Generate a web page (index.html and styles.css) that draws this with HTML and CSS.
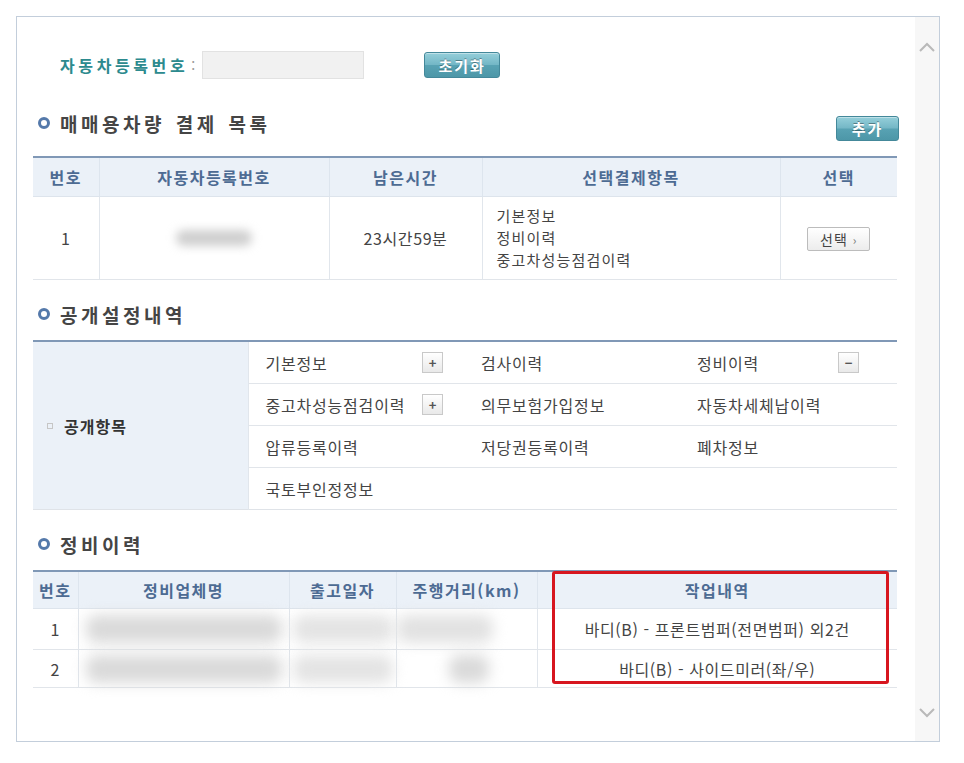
FILE: index.html
```html
<!DOCTYPE html>
<html lang="ko">
<head>
<meta charset="UTF-8" />
<meta name="viewport" content="width=device-width, initial-scale=1" />
<title>매매용차량 결제 목록</title>
<link rel="stylesheet" href="styles.css">
</head>
<body>

<div class="frame">
  <div class="content">

    <div class="search">
      <span class="search-label">자동차등록번호</span><span class="colon">:</span>
      <input class="search-input" type="text" />
      <button class="btn-teal btn-reset">초기화</button>
    </div>

    <div class="sec-head">
      <h2 class="sec-title"><span class="ring"></span>매매용차량 결제 목록</h2>
      <button class="btn-teal btn-add">추가</button>
    </div>

    <table class="grid pay">
      <colgroup>
        <col style="width:66px"><col style="width:230px"><col style="width:153px"><col style="width:298px"><col style="width:117px">
      </colgroup>
      <thead>
        <tr><th>번호</th><th>자동차등록번호</th><th>남은시간</th><th>선택결제항목</th><th>선택</th></tr>
      </thead>
      <tbody>
        <tr>
          <td>1</td>
          <td><div class="blur blur-plate"></div></td>
          <td>23시간59분</td>
          <td class="items">기본정보<br>정비이력<br>중고차성능점검이력</td>
          <td><button class="btn-select">선택 <span class="arr">›</span></button></td>
        </tr>
      </tbody>
    </table>

    <h2 class="sec-title sec-gap"><span class="ring"></span>공개설정내역</h2>

    <table class="open">
      <colgroup>
        <col style="width:215px"><col style="width:216px"><col style="width:216px"><col style="width:217px">
      </colgroup>
      <tbody>
        <tr>
          <th rowspan="4"><span class="sq"></span>공개항목</th>
          <td><div class="cell">기본정보<span class="mini">+</span></div></td>
          <td><div class="cell">검사이력</div></td>
          <td><div class="cell last">정비이력<span class="mini">−</span></div></td>
        </tr>
        <tr>
          <td><div class="cell">중고차성능점검이력<span class="mini">+</span></div></td>
          <td><div class="cell">의무보험가입정보</div></td>
          <td><div class="cell">자동차세체납이력</div></td>
        </tr>
        <tr>
          <td><div class="cell">압류등록이력</div></td>
          <td><div class="cell">저당권등록이력</div></td>
          <td><div class="cell">폐차정보</div></td>
        </tr>
        <tr>
          <td><div class="cell">국토부인정정보</div></td>
          <td></td>
          <td></td>
        </tr>
      </tbody>
    </table>

    <h2 class="sec-title sec-gap"><span class="ring"></span>정비이력</h2>

    <div class="repair-wrap">
      <table class="grid repair">
        <colgroup>
          <col style="width:45px"><col style="width:211px"><col style="width:107px"><col style="width:141px"><col style="width:360px">
        </colgroup>
        <thead>
          <tr><th>번호</th><th>정비업체명</th><th>출고일자</th><th>주행거리(km)</th><th>작업내역</th></tr>
        </thead>
        <tbody>
          <tr class="r1">
            <td>1</td>
            <td><div class="blur blur-name"></div></td>
            <td><div class="blur blur-date"></div></td>
            <td><div class="blur blur-km"></div></td>
            <td>바디(B) - 프론트범퍼(전면범퍼) 외2건</td>
          </tr>
          <tr class="r2">
            <td>2</td>
            <td><div class="blur blur-name"></div></td>
            <td><div class="blur blur-date"></div></td>
            <td><div class="blur blur-km-short"></div></td>
            <td>바디(B) - 사이드미러(좌/우)</td>
          </tr>
        </tbody>
      </table>
      <div class="highlight"></div>
    </div>

  </div>

  <div class="scrollbar">
    <svg width="18" height="12" viewBox="0 0 18 12"><polyline points="2,10 9,3 16,10" fill="none" stroke="#b9b9b9" stroke-width="2"/></svg>
    <svg width="18" height="12" viewBox="0 0 18 12"><polyline points="2,2 9,9 16,2" fill="none" stroke="#b9b9b9" stroke-width="2"/></svg>
  </div>
</div>

</body>
</html>
```

FILE: styles.css
```css
body {
  margin: 0;
  background: #fff;
  font-family: 'Noto Sans CJK KR', 'Noto Sans', sans-serif;
  color: #444;
}
.frame {
  display: flex;
  box-sizing: border-box;
  width: 924px;
  height: 726px;
  margin: 16px 0 0 16px;
  border: 1px solid #c3cedb;
}
.content {
  flex: 1;
  padding: 34px 16px 0 16px;
}

/* 검색줄 */
.search {
  display: flex;
  align-items: center;
  height: 28px;
  margin-left: 27px;
}
.search-label {
  font-size: 16px;
  font-weight: bold;
  letter-spacing: 3.6px;
  color: #2c8a8e;
}
.colon {
  margin: 0 7px 0 3px;
  font-size: 14px;
  color: #999;
}
.search-input {
  box-sizing: border-box;
  width: 162px;
  height: 28px;
  border: 1px solid #e2e2e2;
  background: #f1f1f1;
}
.btn-teal {
  box-sizing: border-box;
  border: 1px solid #44889a;
  border-radius: 3px;
  background: linear-gradient(#95cfda, #74b7c6 48%, #58a2b3 52%, #4d97a8);
  box-shadow: inset 0 1px 0 rgba(255, 255, 255, 0.4);
  color: #fff;
  font-family: inherit;
  font-size: 15px;
  font-weight: bold;
  letter-spacing: 2px;
  text-shadow: 0 -1px 0 rgba(0, 0, 0, 0.35);
  padding: 0;
}
.btn-reset {
  width: 76px;
  height: 26px;
  margin-left: 60px;
}
.btn-add {
  width: 63px;
  height: 25px;
  align-self: flex-end;
}

/* 섹션 제목 */
.sec-head {
  display: flex;
  justify-content: space-between;
  align-items: flex-start;
  height: 30px;
  margin: 32px 0 15px;
}
.sec-title {
  display: flex;
  align-items: center;
  height: 24px;
  margin: 0;
  padding-left: 5px;
  font-size: 19px;
  font-weight: bold;
  letter-spacing: 3.5px;
  word-spacing: 2px;
  color: #454545;
}
.sec-gap {
  margin: 22px 0 14px;
}
.ring {
  box-sizing: border-box;
  width: 12px;
  height: 12px;
  margin-right: 10px;
  border: 3px solid #5479aa;
  border-radius: 50%;
}

/* 공통 표 */
table {
  border-collapse: collapse;
  table-layout: fixed;
  width: 864px;
}
.grid {
  border-top: 2px solid #8098b6;
}
.grid th {
  height: 38px;
  padding: 0;
  background: #ebf1f8;
  border-left: 1px solid #dde5ee;
  border-bottom: 1px solid #dde4ec;
  font-size: 16px;
  font-weight: bold;
  letter-spacing: 1.5px;
  color: #4d6b93;
}
.grid td {
  padding: 0;
  text-align: center;
  font-size: 16px;
  letter-spacing: 0.6px;
  border-left: 1px solid #e1e6ec;
  border-bottom: 1px solid #e1e5ea;
}
.grid th:first-child,
.grid td:first-child {
  border-left: none;
}
.pay td {
  height: 82px;
}
.pay td.items {
  text-align: left;
  padding-left: 14px;
  font-size: 15px;
  letter-spacing: 1.2px;
  line-height: 22px;
}
.btn-select {
  box-sizing: border-box;
  width: 63px;
  height: 24px;
  padding: 0;
  border: 1px solid #bcbcbc;
  border-radius: 2px;
  background: linear-gradient(#fff, #ececec);
  font-family: inherit;
  font-size: 14px;
  letter-spacing: 1px;
  color: #444;
}
.arr {
  font-size: 12px;
  color: #777;
}

/* 흐림 처리 */
.blur {
  height: 20px;
  margin: 0 auto;
  background: #dadada;
  border-radius: 10px;
  filter: blur(7px);
}
.blur-plate { width: 76px; height: 16px; background: #cfcfcf; filter: blur(5px); }
.blur-name { width: 196px; height: 28px; }
.blur-date { width: 100px; height: 28px; background: #e4e4e4; }
.blur-km { width: 96px; height: 28px; margin-left: 0; background: #e2e2e2; }
.blur-km-short { width: 40px; height: 28px; margin-right: 48px; }

/* 공개설정내역 */
.open {
  border-top: 2px solid #8098b6;
  border-bottom: 1px solid #dfe3e8;
}
.open th {
  padding: 0 0 0 14px;
  background: #ebf1f8;
  border-right: 1px solid #e1e6ec;
  text-align: left;
  font-size: 16px;
  font-weight: bold;
  letter-spacing: 1px;
  color: #333;
}
.sq {
  display: inline-block;
  width: 4px;
  height: 4px;
  margin: 0 11px 4px 0;
  border: 1px solid #c6c6c6;
  vertical-align: middle;
}
.open td {
  height: 41px;
  padding: 0;
  border-bottom: 1px solid #e1e5ea;
  font-size: 16px;
  letter-spacing: 0.8px;
}
.open tr:last-child td {
  border-bottom: none;
}
.cell {
  display: flex;
  align-items: center;
  justify-content: space-between;
  padding: 0 21px 0 17px;
}
.cell.last {
  padding-right: 38px;
}
.mini {
  box-sizing: border-box;
  display: flex;
  align-items: center;
  justify-content: center;
  width: 21px;
  height: 21px;
  border: 1px solid #c9c9c9;
  background: linear-gradient(#fff, #e9e9e9);
  font-size: 13px;
  font-weight: bold;
  letter-spacing: 0;
  color: #555;
}

/* 정비이력 */
.repair-wrap {
  position: relative;
}
.repair th {
  height: 36px;
}
.repair .r1 td {
  height: 40px;
}
.repair .r2 td {
  height: 37px;
}
.highlight {
  position: absolute;
  left: 519px;
  top: 1px;
  width: 337px;
  height: 113px;
  box-sizing: border-box;
  border: 3px solid #d7161f;
  border-radius: 3px;
}

.scrollbar {
  display: flex;
  flex-direction: column;
  justify-content: space-between;
  align-items: center;
  width: 24px;
  padding: 24px 0 22px;
  background: #f7f7f7;
  box-sizing: border-box;
}
```
